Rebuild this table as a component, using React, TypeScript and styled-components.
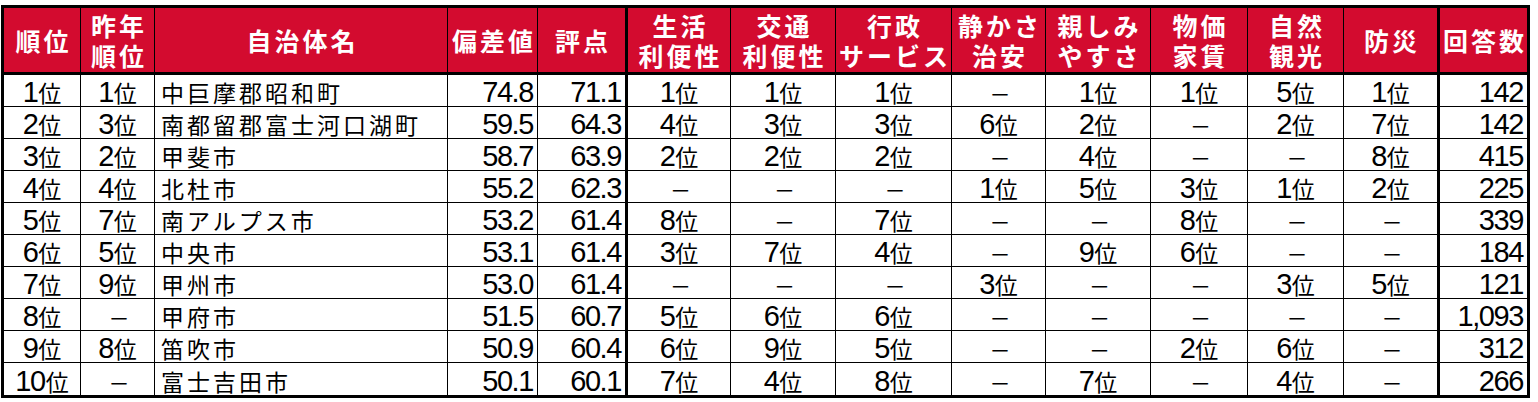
import styled, { createGlobalStyle } from 'styled-components';

const GlobalStyle = createGlobalStyle`
  * { box-sizing: border-box; }
  body {
    margin: 0;
    padding: 5px 0 0 1px;
    background: #fff;
    font-family: 'Noto Sans CJK JP', sans-serif;
  }
`;

const RED = '#d30b2f';

type Align = 'left' | 'center' | 'right';

interface Column {
  label: string[];
  w: number;
  align: Align;
  thick?: boolean;
}

const columns: Column[] = [
  { label: ['順位'], w: 77, align: 'center' },
  { label: ['昨年', '順位'], w: 74, align: 'center' },
  { label: ['自治体名'], w: 293, align: 'left' },
  { label: ['偏差値'], w: 90, align: 'right' },
  { label: ['評点'], w: 90, align: 'right', thick: true },
  { label: ['生活', '利便性'], w: 103, align: 'center' },
  { label: ['交通', '利便性'], w: 105, align: 'center' },
  { label: ['行政', 'サービス'], w: 116, align: 'center' },
  { label: ['静かさ', '治安'], w: 94, align: 'center' },
  { label: ['親しみ', 'やすさ'], w: 105, align: 'center' },
  { label: ['物価', '家賃'], w: 97, align: 'center' },
  { label: ['自然', '観光'], w: 96, align: 'center' },
  { label: ['防災'], w: 96, align: 'center', thick: true },
  { label: ['回答数'], w: 87, align: 'right' },
];

const rows: string[][] = [
  ['1位', '1位', '中巨摩郡昭和町', '74.8', '71.1', '1位', '1位', '1位', '－', '1位', '1位', '5位', '1位', '142'],
  ['2位', '3位', '南都留郡富士河口湖町', '59.5', '64.3', '4位', '3位', '3位', '6位', '2位', '－', '2位', '7位', '142'],
  ['3位', '2位', '甲斐市', '58.7', '63.9', '2位', '2位', '2位', '－', '4位', '－', '－', '8位', '415'],
  ['4位', '4位', '北杜市', '55.2', '62.3', '－', '－', '－', '1位', '5位', '3位', '1位', '2位', '225'],
  ['5位', '7位', '南アルプス市', '53.2', '61.4', '8位', '－', '7位', '－', '－', '8位', '－', '－', '339'],
  ['6位', '5位', '中央市', '53.1', '61.4', '3位', '7位', '4位', '－', '9位', '6位', '－', '－', '184'],
  ['7位', '9位', '甲州市', '53.0', '61.4', '－', '－', '－', '3位', '－', '－', '3位', '5位', '121'],
  ['8位', '－', '甲府市', '51.5', '60.7', '5位', '6位', '6位', '－', '－', '－', '－', '－', '1,093'],
  ['9位', '8位', '笛吹市', '50.9', '60.4', '6位', '9位', '5位', '－', '－', '2位', '6位', '－', '312'],
  ['10位', '－', '富士吉田市', '50.1', '60.1', '7位', '4位', '8位', '－', '7位', '－', '4位', '－', '266'],
];

const Table = styled.table`
  width: 1529px;
  table-layout: fixed;
  border-collapse: separate;
  border-spacing: 0;
  border: 3px solid #000;
`;

const Th = styled.th<{ $w: number; $thick?: boolean }>`
  width: ${(p) => p.$w}px;
  height: 67px;
  padding: 0 0 0 3px;
  background: ${RED};
  color: #fff;
  font-family: 'Noto Sans CJK JP', sans-serif;
  font-size: 25px;
  font-weight: 700;
  letter-spacing: 3px;
  text-align: center;
  vertical-align: middle;
  white-space: nowrap;
  border-right: ${(p) => (p.$thick ? 3 : 1)}px solid #000;
  border-bottom: 3px solid #000;

  &:last-child {
    border-right: none;
  }
`;

const HeadLine = styled.span`
  display: block;
  height: 30px;
  line-height: 30px;
`;

const Td = styled.td<{ $align: Align; $thick?: boolean }>`
  height: 32px;
  padding: 3px ${(p) => (p.$align === 'right' ? 3 : 0)}px 0
    ${(p) => (p.$align === 'left' ? 6 : p.$align === 'center' ? 3 : 0)}px;
  color: #000;
  font-size: 23px;
  letter-spacing: 3px;
  line-height: 26px;
  text-align: ${(p) => p.$align};
  vertical-align: middle;
  white-space: nowrap;
  border-right: ${(p) => (p.$thick ? 3 : 1)}px solid #000;
  border-bottom: 1px solid #000;

  &:last-child {
    border-right: none;
  }

  tr:last-child > & {
    border-bottom: none;
  }
`;

const Num = styled.span`
  font-family: 'Liberation Sans Narrow', 'Liberation Sans', sans-serif;
  font-size: 29px;
  line-height: 0;
  letter-spacing: -1.4px;
  margin-right: 1px;
`;

const Dash = styled.span`
  font-size: 21px;
  line-height: 0;
  letter-spacing: 0;
`;

const Cell = ({ value }: { value: string }) => {
  if (value === '－') return <Dash>－</Dash>;
  if (/^[\d.,]+$/.test(value)) return <Num>{value}</Num>;
  const rank = value.match(/^(\d+)位$/);
  if (rank) {
    return (
      <>
        <Num>{rank[1]}</Num>位
      </>
    );
  }
  return <>{value}</>;
};

const App = () => {
  return (
    <>
      <GlobalStyle />
      <Table>
        <thead>
          <tr>
            {columns.map((c) => (
              <Th key={c.label.join('')} $w={c.w} $thick={c.thick}>
                {c.label.map((line) => (
                  <HeadLine key={line}>{line}</HeadLine>
                ))}
              </Th>
            ))}
          </tr>
        </thead>
        <tbody>
          {rows.map((r) => (
            <tr key={r[2]}>
              {r.map((v, i) => (
                <Td key={i} $align={columns[i].align} $thick={columns[i].thick}>
                  <Cell value={v} />
                </Td>
              ))}
            </tr>
          ))}
        </tbody>
      </Table>
    </>
  );
};

export default App;
